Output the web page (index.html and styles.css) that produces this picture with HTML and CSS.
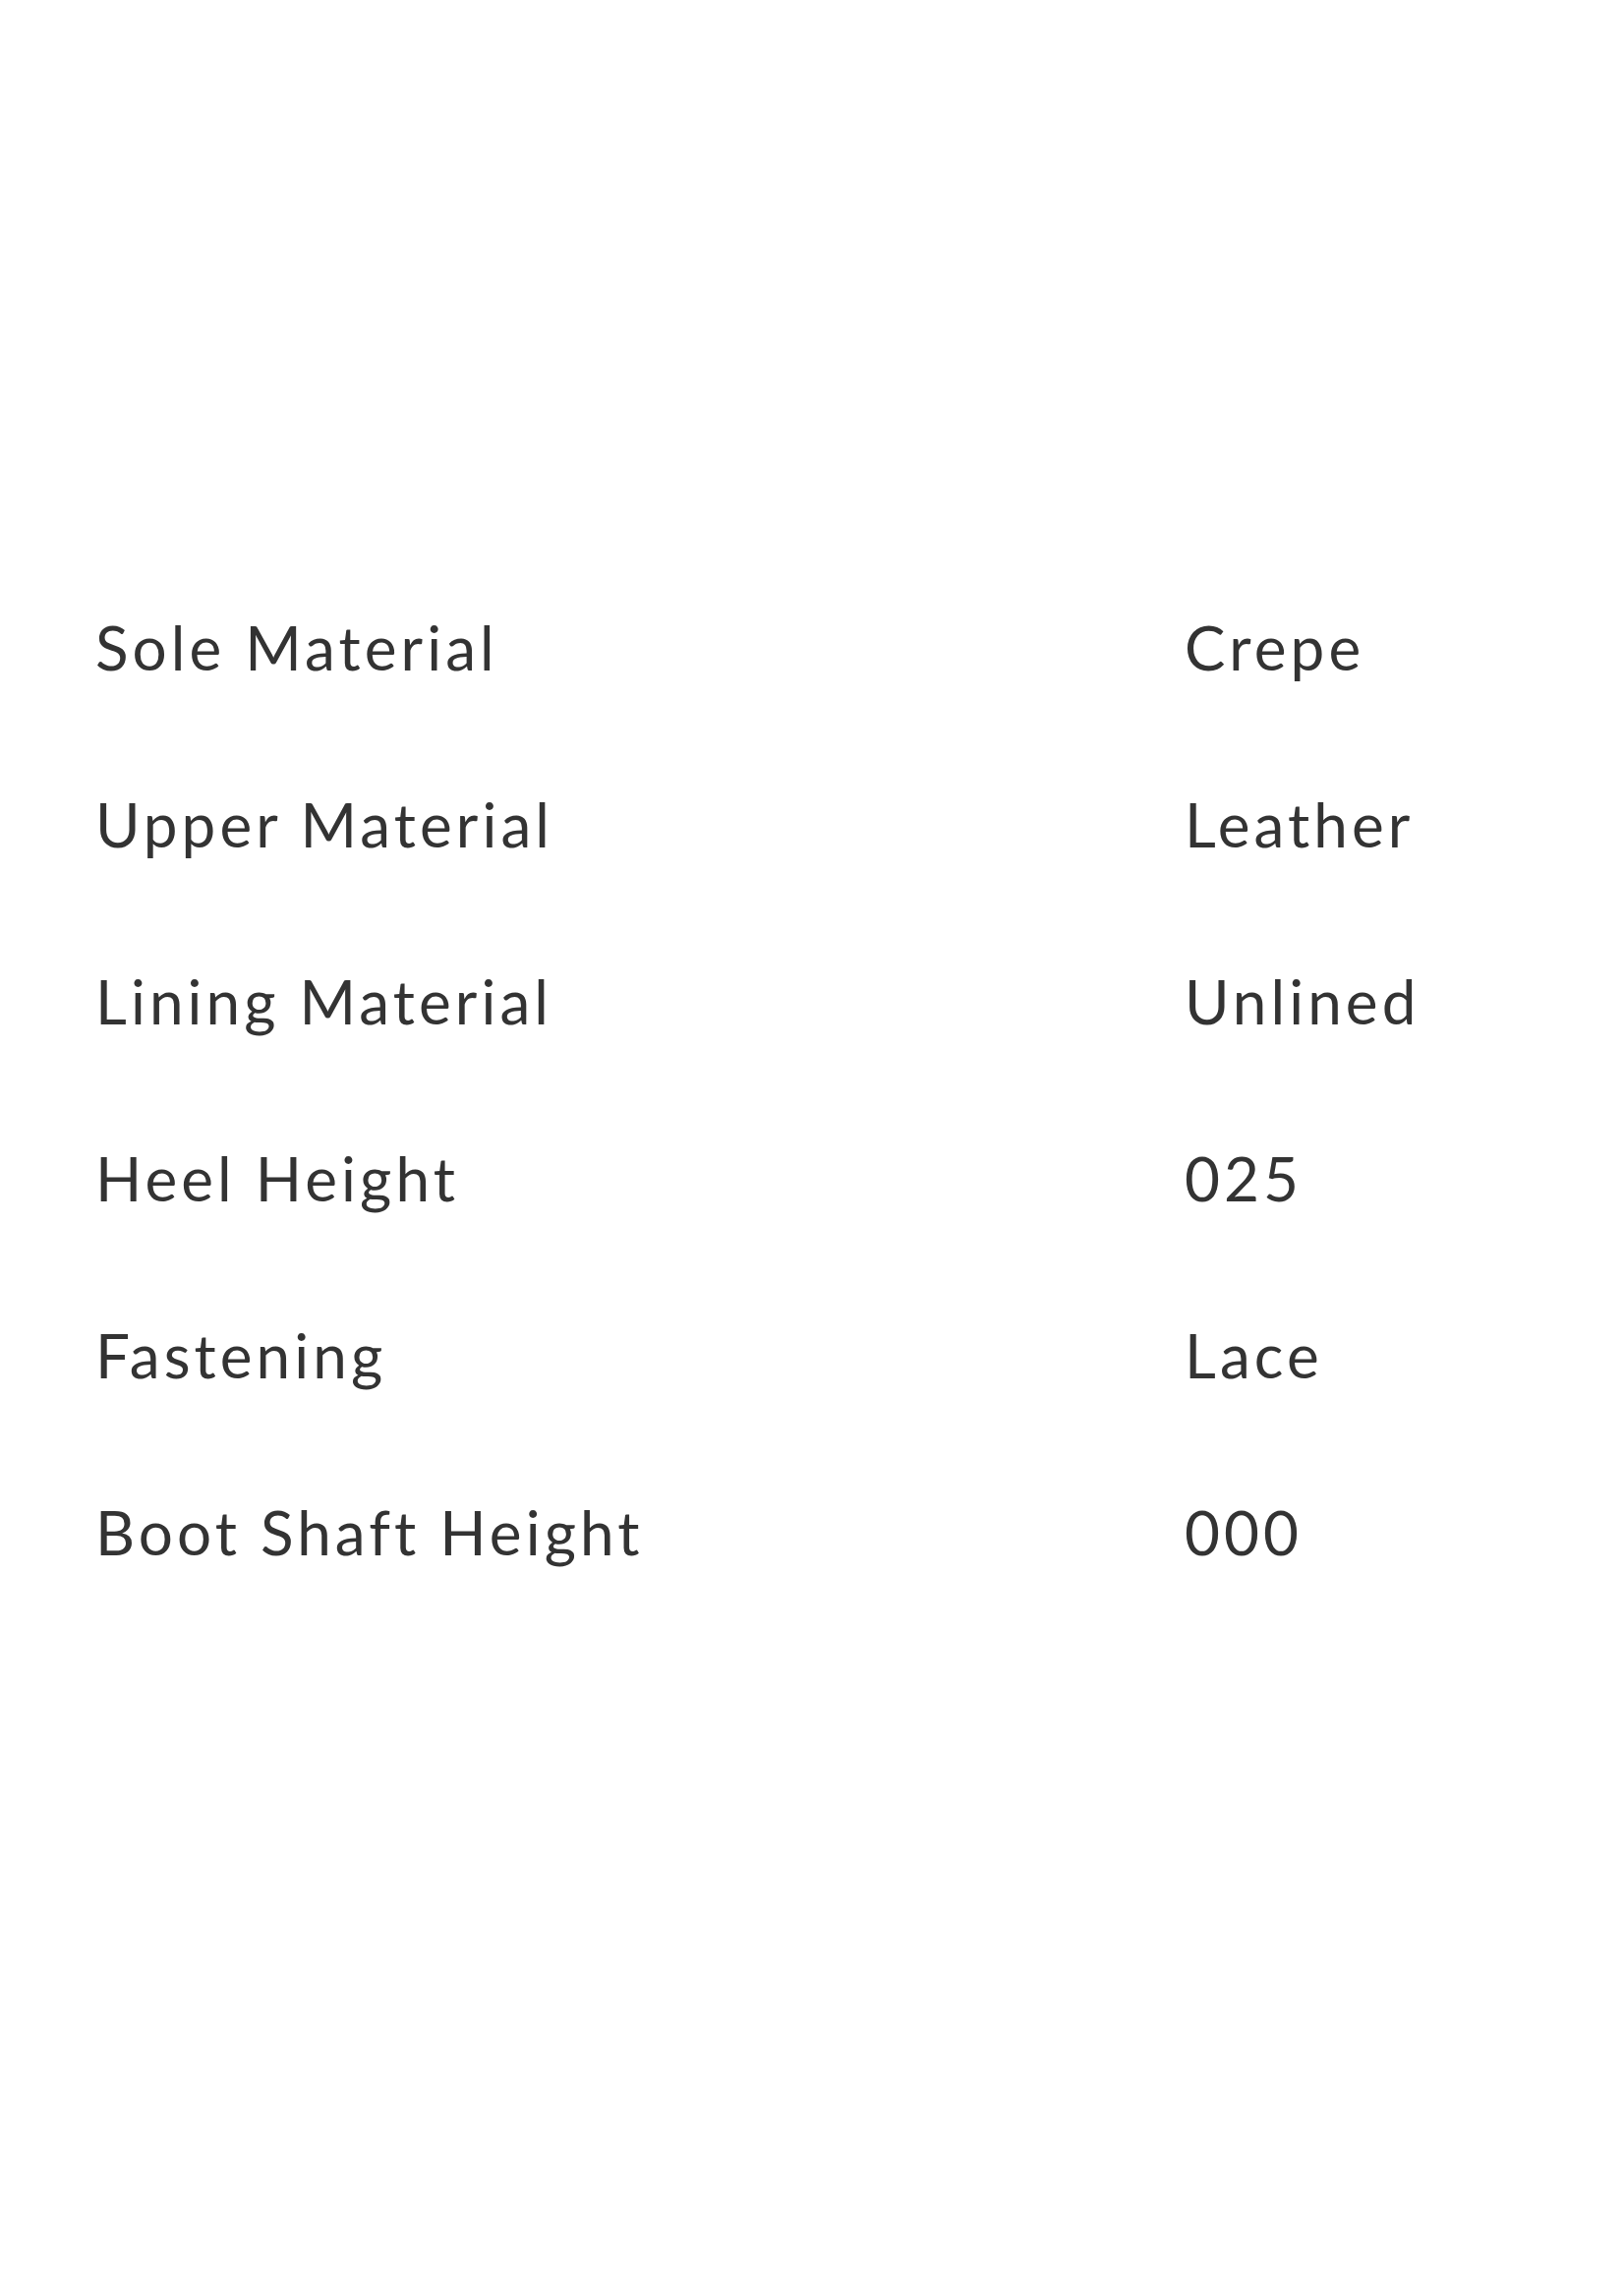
FILE: index.html
```html
<!DOCTYPE html>
<html lang="en">
<head>
<meta charset="utf-8">
<title>Specifications</title>
<link rel="stylesheet" href="styles.css">
</head>
<body>
<div class="specs">
  <div class="row"><span class="label">Sole Material</span><span class="value">Crepe</span></div>
  <div class="row"><span class="label">Upper Material</span><span class="value">Leather</span></div>
  <div class="row"><span class="label">Lining Material</span><span class="value">Unlined</span></div>
  <div class="row"><span class="label">Heel Height</span><span class="value">025</span></div>
  <div class="row"><span class="label">Fastening</span><span class="value">Lace</span></div>
  <div class="row"><span class="label">Boot Shaft Height</span><span class="value">000</span></div>
</div>
</body>
</html>
```
FILE: styles.css
```css
html, body {
  margin: 0;
  padding: 0;
  background: #ffffff;
}
body {
  font-family: Lato, "Open Sans", sans-serif;
  color: #333333;
}
.specs {
  padding-top: 568px;
  padding-left: 97px;
}
.row {
  display: grid;
  grid-template-columns: 1108px auto;
  height: 180px;
  line-height: 180px;
  font-size: 62px;
  letter-spacing: 0.066em;
}
```
